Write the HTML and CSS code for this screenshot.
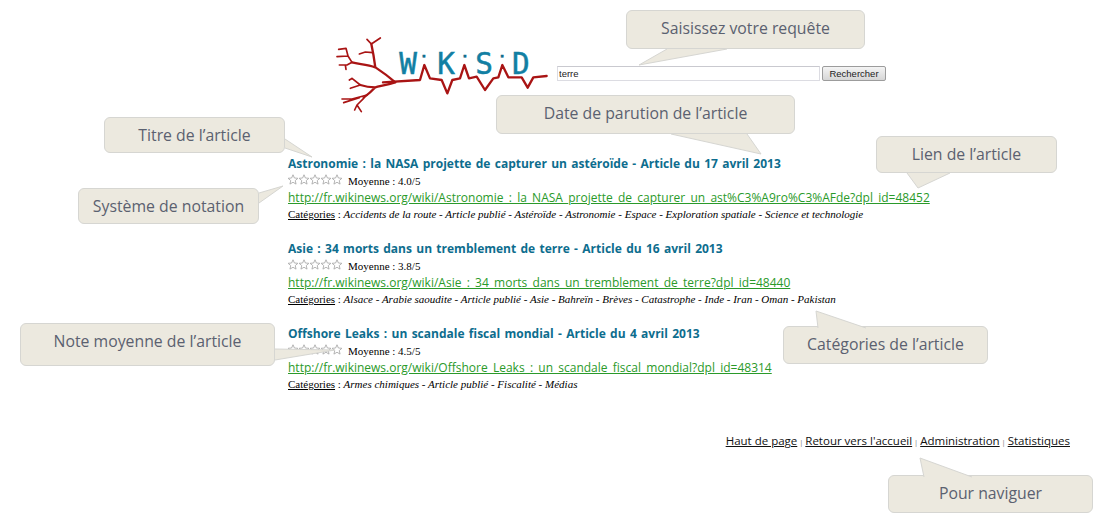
FILE: index.html
```html
<!DOCTYPE html>
<html lang="fr">
<head>
<meta charset="utf-8">
<title>WiKiSiD</title>
<link rel="stylesheet" href="styles.css">
</head>
<body>
<svg class="defs" width="0" height="0" aria-hidden="true">
  <symbol id="star" viewBox="1 0 22 22"><polygon points="11,1.5 13.8,8 20.8,8.6 15.5,13.2 17.1,20.2 11,16.5 4.9,20.2 6.5,13.2 1.2,8.6 8.2,8" fill="#fff" stroke="#a8a8a8" stroke-width="1.7"/></symbol>
</svg>
<div class="page">
  <header class="head">
    <svg class="logo" viewBox="42 105 660 240" aria-label="WiKiSiD">
      <clipPath id="dots"><rect x="0" y="100" width="700" height="77"/></clipPath>
      <g class="logo-text">
        <text x="238" y="221">W</text><text class="logo-i" clip-path="url(#dots)" x="303" y="222">i</text><text x="352" y="221">K</text><text class="logo-i" clip-path="url(#dots)" x="426" y="222">i</text><text x="466" y="221">S</text><text class="logo-i" clip-path="url(#dots)" x="538" y="222">i</text><text x="576" y="221">D</text>
      </g>
      <g class="logo-tree" transform="translate(36 90)">
        <path class="twig" d="M60 97L48 78L42 55L20 58M48 78L15 80M60 97L45 105L22 105M40 105L42 118M122 68L100 66L82 72M118 42L105 28M118 42L145 24M85 165L60 145M60 145L52 150M85 165L55 175M105 195L60 207L30 207M82 203L35 218M95 205L75 225L88 245M75 225L68 240"/>
        <path d="M190 157C165 135 145 122 130 112C105 102 80 103 60 97M130 112C127 90 123 65 118 42M190 157C165 165 145 168 130 172C118 185 110 192 95 203M130 172C115 172 100 170 85 165"/>
      </g>
      <g class="logo-tree" transform="translate(225 135)">
        <path d="M-36 112L75 105L88 60L105 100L140 105L157 145L172 105L195 100L208 60L222 100L245 95L270 135L295 100L310 97L322 60L340 97L380 97L398 128L415 97L455 93"/>
      </g>
    </svg>
    <form class="search">
      <input class="search-input" type="text" value="terre">
      <button class="search-btn" type="button">Rechercher</button>
    </form>
  </header>

  <main class="results">
    <article class="item">
      <h2 class="item-title">Astronomie : la NASA projette de capturer un astéroïde - Article du 17 avril 2013</h2>
      <div class="rating"><span class="stars"><svg><use href="#star"/></svg><svg><use href="#star"/></svg><svg><use href="#star"/></svg><svg><use href="#star"/></svg><svg><use href="#star"/></svg></span>Moyenne : 4.0/5</div>
      <a class="item-link" href="#">http://fr.wikinews.org/wiki/Astronomie_:_la_NASA_projette_de_capturer_un_ast%C3%A9ro%C3%AFde?dpl_id=48452</a>
      <p class="cats"><span class="cats-label">Catégories</span> : <em>Accidents de la route - Article publié - Astéroïde - Astronomie - Espace - Exploration spatiale - Science et technologie</em></p>
    </article>
    <article class="item">
      <h2 class="item-title">Asie : 34 morts dans un tremblement de terre - Article du 16 avril 2013</h2>
      <div class="rating"><span class="stars"><svg><use href="#star"/></svg><svg><use href="#star"/></svg><svg><use href="#star"/></svg><svg><use href="#star"/></svg><svg><use href="#star"/></svg></span>Moyenne : 3.8/5</div>
      <a class="item-link" href="#">http://fr.wikinews.org/wiki/Asie_:_34_morts_dans_un_tremblement_de_terre?dpl_id=48440</a>
      <p class="cats"><span class="cats-label">Catégories</span> : <em>Alsace - Arabie saoudite - Article publié - Asie - Bahreïn - Brèves - Catastrophe - Inde - Iran - Oman - Pakistan</em></p>
    </article>
    <article class="item">
      <h2 class="item-title">Offshore Leaks : un scandale fiscal mondial - Article du 4 avril 2013</h2>
      <div class="rating"><span class="stars"><svg><use href="#star"/></svg><svg><use href="#star"/></svg><svg><use href="#star"/></svg><svg><use href="#star"/></svg><svg><use href="#star"/></svg></span>Moyenne : 4.5/5</div>
      <a class="item-link" href="#">http://fr.wikinews.org/wiki/Offshore_Leaks_:_un_scandale_fiscal_mondial?dpl_id=48314</a>
      <p class="cats"><span class="cats-label">Catégories</span> : <em>Armes chimiques - Article publié - Fiscalité - Médias</em></p>
    </article>
  </main>

  <footer class="foot">
    <a href="#">Haut de page</a> | <a href="#">Retour vers l'accueil</a> | <a href="#">Administration</a> | <a href="#">Statistiques</a>
  </footer>
</div>

<div class="note note-query">Saisissez votre requête<svg class="tail tail-query" viewBox="0 0 100 30"><path d="M40 1L12 17L100 1"/></svg></div>
<div class="note note-date">Date de parution de l’article<svg class="tail tail-date" viewBox="0 0 100 30"><path d="M2 1L92 21L78 1"/></svg></div>
<div class="note note-title">Titre de l’article<svg class="tail tail-title" viewBox="0 0 50 30"><path d="M1 1L28 19L1 10"/></svg></div>
<div class="note note-rating">Système de notation<svg class="tail tail-rating" viewBox="0 0 40 30"><path d="M1 9L25 2L1 19"/></svg></div>
<div class="note note-average">Note moyenne de l’article<svg class="tail tail-average" viewBox="0 0 70 20"><path d="M1 4L61 5L1 15"/></svg></div>
<div class="note note-link">Lien de l’article<svg class="tail tail-link" viewBox="0 0 60 20"><path d="M30 1L41 16L73 1"/></svg></div>
<div class="note note-cats">Catégories de l’article<svg class="tail tail-cats" viewBox="0 0 60 20"><path d="M4 19L2 2L52 19"/></svg></div>
<div class="note note-nav">Pour naviguer<svg class="tail tail-nav" viewBox="0 0 60 20"><path d="M5 21L1 2L53 21"/></svg></div>
</body>
</html>
```

FILE: styles.css
```css
* { box-sizing: border-box; }
html, body { margin: 0; padding: 0; background: #fff; }
body { width: 1107px; height: 523px; overflow: hidden; position: relative; font-family: "Liberation Serif", serif; color: #000; }
.defs { position: absolute; }
.page { display: flex; flex-direction: column; }

.head { display: flex; align-items: flex-start; height: 154px; padding: 35px 0 0 334px; }
.logo { width: 220px; height: 80px; display: block; flex: none; }
.logo-text text { font-family: "DejaVu Sans Mono", monospace; font-size: 88px; fill: #127fa3; stroke: #127fa3; stroke-width: 1.5; }
.logo-text .logo-i { font-family: "Liberation Sans", sans-serif; font-size: 78px; fill: #0f6d8c; stroke: #0f6d8c; }
.logo-tree path { fill: none; stroke: #a91414; stroke-width: 7; stroke-linecap: round; stroke-linejoin: round; }
.logo-tree .twig { stroke-width: 5; }
.search { display: flex; gap: 2px; margin: 31px 0 0 3px; }
.search-input { width: 263px; height: 15px; padding: 0 1px; border: 1px solid #dcdce2; border-top-color: #c9c9cf; font: 9.5px "Liberation Sans", sans-serif; color: #222; background: #fff; outline: 0; }
.search-btn { width: 64px; height: 15px; padding: 0; border: 1px solid #9c9c9c; border-radius: 2px; background: linear-gradient(#f4f4f4, #d6d6d6); font: 9.5px "Liberation Sans", sans-serif; color: #222; }

.results { display: flex; flex-direction: column; padding-left: 288px; }
.item { height: 85px; }
.item-title { margin: 0; height: 18px; font: bold 12px/19px "Open Sans", sans-serif; word-spacing: 1.2px; color: #0d6d8e; white-space: nowrap; }
.rating { display: flex; align-items: center; height: 18px; font-size: 11px; }
.stars { display: flex; width: 60px; }
.stars svg { width: 11px; height: 11px; margin-bottom: 3px; }
.item-link { display: block; height: 16px; font: 12px/16px "Open Sans", sans-serif; color: #2a9a2a; white-space: nowrap; }
.cats { margin: 0; font-size: 11px; line-height: 17px; white-space: nowrap; }
.cats-label { text-decoration: underline; }

.foot { margin-top: 25px; padding-right: 37px; text-align: right; font: 7.5px/14px "Open Sans", sans-serif; color: #777; }
.foot a { color: #111; font-size: 11.5px; }

.note { position: absolute; display: flex; align-items: center; justify-content: center; background: #ece9df; border: 1px solid #d6d6d2; border-radius: 6px; font: 15.8px "Open Sans", sans-serif; color: #5b6170; white-space: nowrap; }
.tail { position: absolute; overflow: visible; }
.tail path { fill: #ece9df; stroke: #d6d6d2; stroke-width: 1; }
.note-query { left: 626px; top: 10px; width: 239px; height: 39px; padding-bottom: 4px; }
.tail-query { left: 0; top: 37px; width: 100px; height: 30px; }
.note-date { left: 496px; top: 95px; width: 299px; height: 39px; padding-bottom: 4px; }
.tail-date { left: 172px; top: 37px; width: 100px; height: 30px; }
.note-title { left: 104px; top: 117px; width: 181px; height: 36px; }
.tail-title { left: 179px; top: 20px; width: 50px; height: 30px; }
.note-rating { left: 78px; top: 188px; width: 181px; height: 36px; }
.tail-rating { left: 179px; top: -5px; width: 40px; height: 30px; }
.note-average { left: 20px; top: 323px; width: 255px; height: 43px; padding-bottom: 8px; }
.tail-average { left: 253px; top: 21px; width: 70px; height: 20px; }
.note-link { left: 876px; top: 136px; width: 181px; height: 37px; padding-bottom: 2px; }
.tail-link { left: 0; top: 35px; width: 60px; height: 20px; }
.note-cats { left: 783px; top: 326px; width: 205px; height: 38px; padding-bottom: 2px; }
.tail-cats { left: 30px; top: -18px; width: 60px; height: 20px; }
.note-nav { left: 888px; top: 475px; width: 205px; height: 38px; padding-bottom: 2px; }
.tail-nav { left: 30px; top: -20px; width: 60px; height: 20px; }
```
